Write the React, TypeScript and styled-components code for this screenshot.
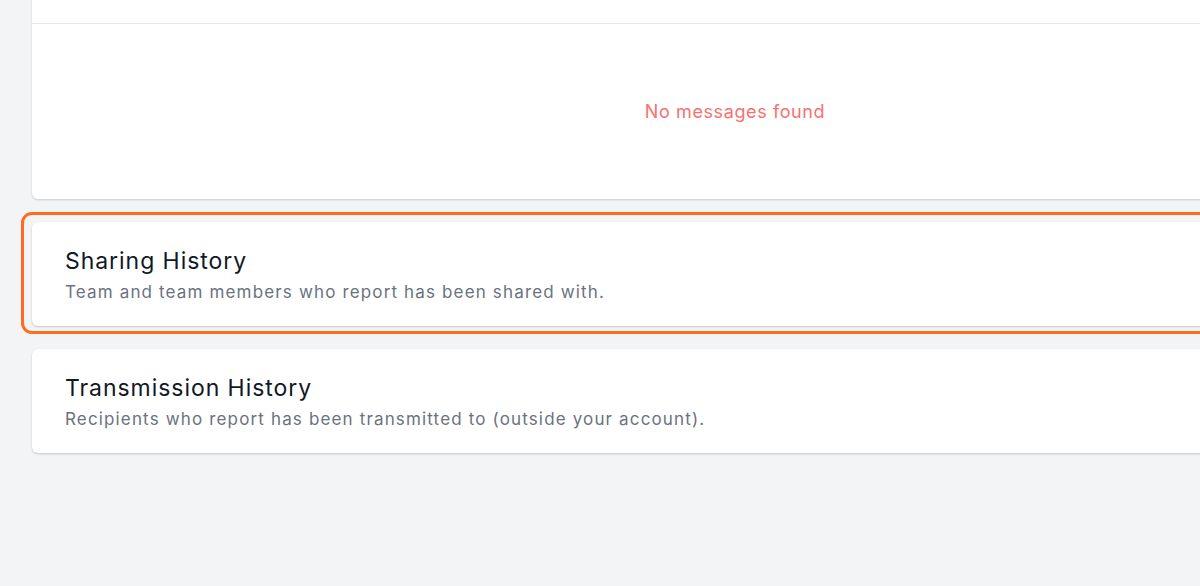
import React from "react";
import styled, { createGlobalStyle } from "styled-components";

const GlobalStyle = createGlobalStyle`
  html, body {
    margin: 0;
    padding: 0;
    background: #f3f4f6;
    overflow: hidden;
  }
  body {
    font-family: Inter, "Noto Sans", "Liberation Sans", sans-serif;
    -webkit-font-smoothing: antialiased;
  }
`;

type Section = {
  title: string;
  description: string;
  highlighted?: boolean;
};

const sections: Section[] = [
  {
    title: "Sharing History",
    description: "Team and team members who report has been shared with.",
    highlighted: true,
  },
  {
    title: "Transmission History",
    description:
      "Recipients who report has been transmitted to (outside your account).",
  },
];

const App: React.FC = () => {
  return (
    <>
      <GlobalStyle />
      <StyledPage>
        <StyledColumn>
          <StyledMessagesCard>
            <StyledMessagesHeader />
            <StyledEmptyState>No messages found</StyledEmptyState>
          </StyledMessagesCard>

          {sections.map((section) => (
            <StyledSectionCard key={section.title} $highlighted={section.highlighted}>
              <StyledSectionTitle>{section.title}</StyledSectionTitle>
              <StyledSectionDescription>{section.description}</StyledSectionDescription>
            </StyledSectionCard>
          ))}
        </StyledColumn>
      </StyledPage>
    </>
  );
};

const StyledPage = styled.div`
  width: 1200px;
  height: 586px;
  overflow: hidden;
`;

const StyledColumn = styled.div`
  display: flex;
  flex-direction: column;
  gap: 23px;
  margin-left: 32px;
  width: 1406px;
`;

const StyledMessagesCard = styled.div`
  margin-top: -40px;
  background: #ffffff;
  border-radius: 0 0 6px 6px;
  box-shadow: 0 1px 2px rgba(0, 0, 0, 0.12), 0 1px 3px rgba(0, 0, 0, 0.06);
`;

const StyledMessagesHeader = styled.div`
  height: 63px;
  border-bottom: 1px solid #e5e7eb;
`;

const StyledEmptyState = styled.div`
  height: 175px;
  display: flex;
  align-items: center;
  justify-content: center;
  font-size: 18px;
  letter-spacing: 0.6px;
  color: #f87171;
  padding-bottom: 1px;
  box-sizing: border-box;
`;

const StyledSectionCard = styled.div<{ $highlighted?: boolean }>`
  position: relative;
  background: #ffffff;
  border-radius: 6px;
  padding: 24px 33px 22px;
  box-shadow: 0 1px 2px rgba(0, 0, 0, 0.14), 0 1px 3px rgba(0, 0, 0, 0.06);

  ${({ $highlighted }) =>
    $highlighted &&
    `
    &::after {
      content: "";
      position: absolute;
      top: -10px;
      left: -11px;
      right: -11px;
      bottom: -8px;
      border: 3px solid #ff6b1f;
      border-radius: 11px;
      pointer-events: none;
    }
  `}
`;

const StyledSectionTitle = styled.h2`
  margin: 0;
  font-size: 23px;
  font-weight: 400;
  line-height: 30px;
  letter-spacing: 0.95px;
  color: #111827;
`;

const StyledSectionDescription = styled.p`
  margin: 4px 0 0;
  font-size: 17px;
  line-height: 24px;
  letter-spacing: 1.15px;
  color: #6b7280;
`;

export default App;
